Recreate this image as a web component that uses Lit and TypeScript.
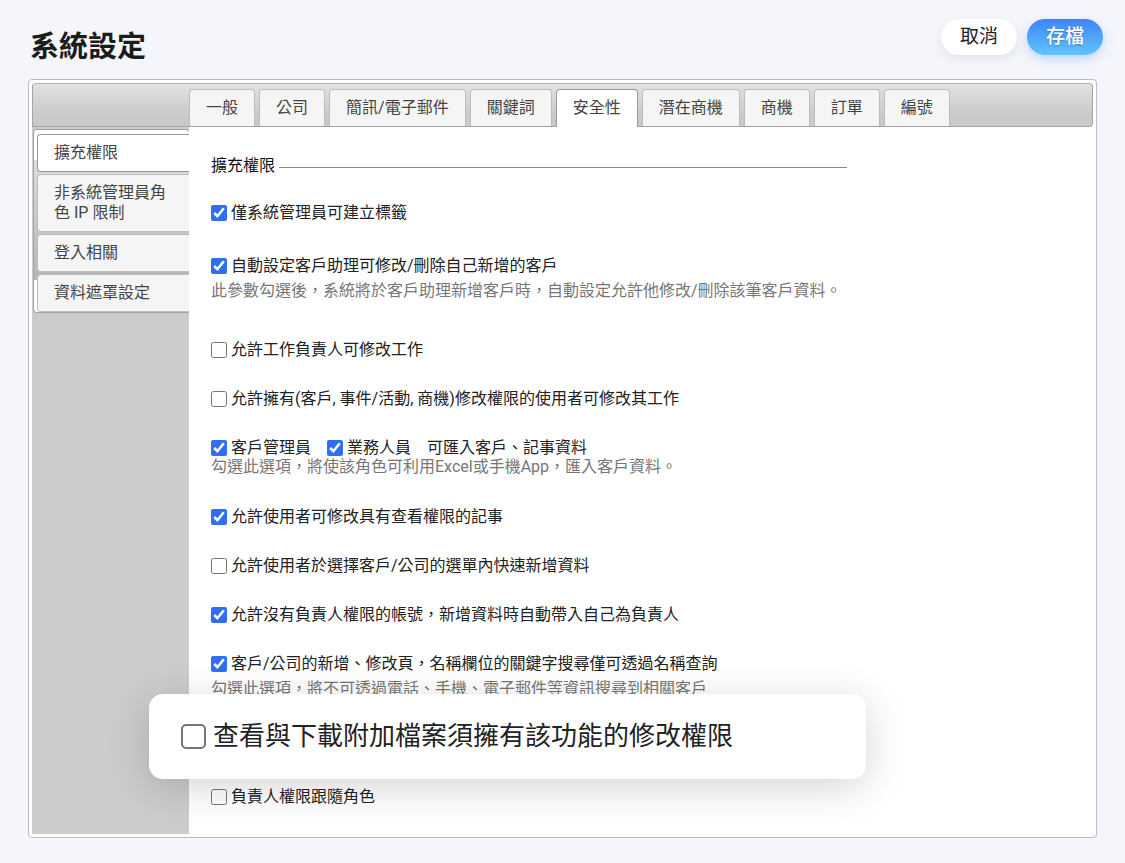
import { LitElement, html, css, nothing } from "lit";
import { customElement, property, state } from "lit/decorators.js";
import { classMap } from "lit/directives/class-map.js";

interface Option {
  id: string;
  label: string;
  checked: boolean;
}

interface Setting {
  options: Option[];
  tail?: string;
  hint?: string;
  spacing?: "wide" | "tight" | "lead";
  spotlight?: boolean;
}

const TABS = ["一般", "公司", "簡訊/電子郵件", "關鍵詞", "安全性", "潛在商機", "商機", "訂單", "編號"];

const SECTIONS = ["擴充權限", "非系統管理員角色 IP 限制", "登入相關", "資料遮罩設定"];

const SETTINGS: Setting[] = [
  {
    options: [{ id: "tag", label: "僅系統管理員可建立標籤", checked: true }],
    spacing: "lead",
  },
  {
    options: [{ id: "assistant", label: "自動設定客戶助理可修改/刪除自己新增的客戶", checked: true }],
    hint: "此參數勾選後，系統將於客戶助理新增客戶時，自動設定允許他修改/刪除該筆客戶資料。",
    spacing: "wide",
  },
  { options: [{ id: "task-owner", label: "允許工作負責人可修改工作", checked: false }] },
  {
    options: [
      { id: "task-related", label: "允許擁有(客戶, 事件/活動, 商機)修改權限的使用者可修改其工作", checked: false },
    ],
  },
  {
    options: [
      { id: "import-admin", label: "客戶管理員", checked: true },
      { id: "import-sales", label: "業務人員", checked: true },
    ],
    tail: "可匯入客戶、記事資料",
    hint: "勾選此選項，將使該角色可利用Excel或手機App，匯入客戶資料。",
    spacing: "tight",
  },
  { options: [{ id: "note", label: "允許使用者可修改具有查看權限的記事", checked: true }] },
  { options: [{ id: "quick-add", label: "允許使用者於選擇客戶/公司的選單內快速新增資料", checked: false }] },
  { options: [{ id: "self-owner", label: "允許沒有負責人權限的帳號，新增資料時自動帶入自己為負責人", checked: true }] },
  {
    options: [
      { id: "name-search", label: "客戶/公司的新增、修改頁，名稱欄位的關鍵字搜尋僅可透過名稱查詢", checked: true },
    ],
    hint: "勾選此選項，將不可透過電話、手機、電子郵件等資訊搜尋到相關客戶",
  },
  {
    options: [{ id: "attachment", label: "查看與下載附加檔案須擁有該功能的修改權限", checked: false }],
    spacing: "wide",
    spotlight: true,
  },
  { options: [{ id: "follow-role", label: "負責人權限跟隨角色", checked: false }] },
];

@customElement("setting-row")
class SettingRow extends LitElement {
  @property({ attribute: false }) setting!: Setting;

  static styles = css`
    :host {
      display: block;
      margin-bottom: 24px;
      color: #222;
    }
    :host(.lead) {
      margin-bottom: 28px;
    }
    :host(.wide) {
      margin-bottom: 34px;
    }
    :host(.tight) {
      margin: 27px 0 28px;
    }
    .line {
      display: flex;
      flex-wrap: wrap;
      column-gap: 16px;
      line-height: 25px;
    }
    .hint {
      margin: 0;
      color: #777;
      line-height: 25px;
    }
    :host(.tight) .line,
    :host(.tight) .hint {
      line-height: 19px;
    }
    .option {
      display: flex;
      align-items: center;
      gap: 4px;
    }
    .box {
      flex: none;
      width: 16px;
      height: 16px;
      margin: 0;
      accent-color: #2f6ff6;
    }
    .anchor {
      position: relative;
      height: 25px;
    }
    .spotlight {
      position: absolute;
      top: -31px;
      left: -62px;
      right: -19px;
      box-sizing: border-box;
      padding: 22px 32px 23px;
      border-radius: 14px;
      background: #fff;
      box-shadow: 0 8px 40px rgba(0, 0, 0, 0.17);
      font-size: 26px;
      line-height: 40px;
    }
    .spotlight .option {
      gap: 7px;
    }
    .spotlight .box {
      appearance: none;
      box-sizing: border-box;
      width: 25px;
      height: 25px;
      border: 2px solid #767676;
      border-radius: 5px;
      background: #fff;
    }
    .spotlight .box:checked {
      border-color: #2f6ff6;
      background: #2f6ff6;
      box-shadow: inset 0 0 0 4px #fff;
    }
  `;

  private option(o: Option) {
    return html`<label class="option">
      <input class="box" type="checkbox" name=${o.id} .checked=${o.checked} />
      <span>${o.label}</span>
    </label>`;
  }

  render() {
    const { options, tail, hint, spotlight } = this.setting;
    if (spotlight) {
      return html`<div class="anchor">
        <div class="spotlight">${options.map((o) => this.option(o))}</div>
      </div>`;
    }
    return html`
      <div class="line">
        ${options.map((o) => this.option(o))}${tail ? html`<span>${tail}</span>` : nothing}
      </div>
      ${hint ? html`<p class="hint">${hint}</p>` : nothing}
    `;
  }
}

@customElement("app-root")
class AppRoot extends LitElement {
  @state() private tab = 4;
  @state() private section = 0;

  static styles = css`
    :host {
      display: block;
      box-sizing: border-box;
      min-height: 100vh;
      padding: 19px 28px 25px;
      background: #f5f6fb;
      color: #222;
      font-family: Roboto, "Noto Sans CJK TC", sans-serif;
      font-size: 16px;
    }
    .header {
      display: flex;
      justify-content: space-between;
      align-items: flex-start;
      height: 60px;
      padding-left: 2px;
    }
    .title {
      margin: 8px 0 0;
      font-size: 29px;
      line-height: 40px;
      font-weight: 700;
      color: #1c1c1c;
    }
    .actions {
      display: flex;
      gap: 10px;
      margin-right: -6px;
    }
    .action {
      height: 36px;
      padding: 0 19px;
      border: 0;
      border-radius: 18px;
      background: #fff;
      box-shadow: 0 4px 12px rgba(0, 0, 0, 0.08);
      color: #222;
      font: inherit;
      font-size: 19px;
      line-height: 36px;
    }
    .primary {
      background: linear-gradient(#3d84f7, #62c4ff);
      box-shadow: 0 4px 12px rgba(60, 130, 255, 0.28);
      color: #fff;
      font-weight: 500;
      text-shadow: 0 1px 2px rgba(0, 0, 0, 0.25);
    }
    .panel {
      padding: 3px;
      border: 1px solid #bbb;
      border-radius: 4px;
      background: #fff;
    }
    .tabs {
      display: flex;
      gap: 4px;
      padding: 5px 0 0 156px;
      border: 1px solid #a4a4a4;
      border-top-color: #b0b0b0;
      border-radius: 4px 4px 4px 0;
      background: linear-gradient(#e2e2e2, #c9c9c9 75%);
    }
    .tab {
      height: 37px;
      padding: 0 16px 1px;
      border: 1px solid #bdbdbd;
      border-bottom: 0;
      border-radius: 4px 4px 0 0;
      background: #f5f5f5;
      color: #444;
      font: inherit;
      line-height: 35px;
      white-space: nowrap;
    }
    .tab.active {
      height: 38px;
      margin-bottom: -1px;
      padding-bottom: 2px;
      border-color: #999;
      background: #fff;
    }
    .body {
      display: grid;
      grid-template-columns: 157px minmax(0, 1fr);
    }
    .side {
      padding: 2px 0 0 1px;
      background: #ccc;
    }
    .menu {
      display: flex;
      flex-direction: column;
      gap: 2px;
      padding: 4px 0 0 3px;
      border: 1px solid #a4a4a4;
      border-right: 0;
      border-radius: 4px 4px 0 4px;
      background: linear-gradient(#fff 30px, #ddd 30px, #b5b5b5 150px, #fff 150px);
    }
    .item {
      padding: 8px 16px;
      border: 1px solid #bdbdbd;
      border-right: 0;
      border-radius: 4px 0 0 4px;
      background: #f5f5f5;
      color: #444;
      font: inherit;
      line-height: 20px;
      text-align: left;
    }
    .item.active {
      border-color: #999;
      background: #fff;
    }
    .content {
      padding: 27px 22px 1px;
    }
    .group {
      max-width: 636px;
      min-width: 0;
      margin: 0;
      padding: 0;
      border: 0;
      border-top: 1px solid #888;
      white-space: nowrap;
    }
    .legend {
      padding: 0 4px 2px 0;
      color: #111;
      line-height: 24px;
    }
    .rows {
      display: flow-root;
      padding-top: 20px;
    }
  `;

  render() {
    return html`
      <header class="header">
        <h1 class="title">系統設定</h1>
        <div class="actions">
          <button class="action" type="button">取消</button>
          <button class="action primary" type="button">存檔</button>
        </div>
      </header>
      <main class="panel">
        <nav class="tabs">
          ${TABS.map(
            (name, i) => html`<button
              type="button"
              class=${classMap({ tab: true, active: i === this.tab })}
              @click=${() => (this.tab = i)}
            >${name}</button>`
          )}
        </nav>
        <div class="body">
          <aside class="side">
            <nav class="menu">
              ${SECTIONS.map(
                (name, i) => html`<button
                  type="button"
                  class=${classMap({ item: true, active: i === this.section })}
                  @click=${() => (this.section = i)}
                >${name}</button>`
              )}
            </nav>
          </aside>
          <section class="content">
            <fieldset class="group">
              <legend class="legend">${SECTIONS[this.section]}</legend>
              <div class="rows">
                ${SETTINGS.map(
                  (s) => html`<setting-row class=${s.spacing ?? ""} .setting=${s}></setting-row>`
                )}
              </div>
            </fieldset>
          </section>
        </div>
      </main>
    `;
  }
}
